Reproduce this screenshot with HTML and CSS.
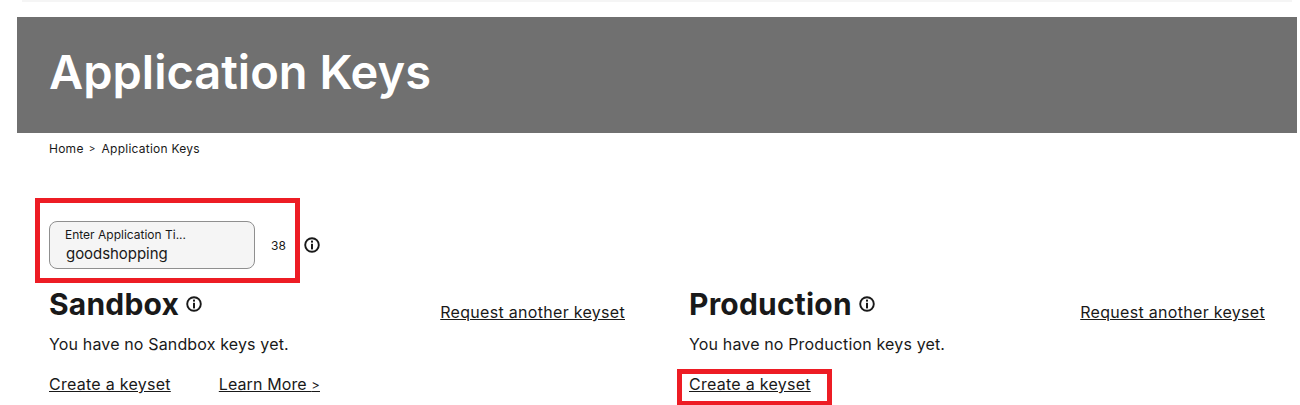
FILE: index.html
```html
<!DOCTYPE html>
<html lang="en">
<head>
  <meta charset="UTF-8">
  <meta name="viewport" content="width=device-width, initial-scale=1">
  <title>Application Keys</title>
  <link rel="stylesheet" href="styles.css">
</head>
<body>
  <div class="top-line"></div>
  <div class="page">
    <div class="banner"><h1>Application Keys</h1></div>
    <div class="content">
      <div class="crumbs"><a href="#">Home</a><span class="sep">&gt;</span><a href="#">Application Keys</a></div>

      <div class="title-row">
        <div class="field">
          <label>Enter Application Ti...</label>
          <div class="value">goodshopping</div>
        </div>
        <span class="count">38</span>
        <svg class="info info-lg" viewBox="0 0 16 16"><circle cx="8" cy="8" r="6.8"/><rect class="dot" x="7" y="3.6" width="2" height="2"/><rect class="dot" x="7" y="6.8" width="2" height="5.6"/></svg>
        <div class="highlight highlight-field"></div>
      </div>

      <div class="keys">
        <section class="keyset">
          <div class="keyset-head">
            <h2>Sandbox</h2>
            <svg class="info" viewBox="0 0 16 16"><circle cx="8" cy="8" r="6.8"/><rect class="dot" x="7" y="3.6" width="2" height="2"/><rect class="dot" x="7" y="6.8" width="2" height="5.6"/></svg>
            <a class="request" href="#">Request another keyset</a>
          </div>
          <p>You have no Sandbox keys yet.</p>
          <div class="links"><a href="#">Create a keyset</a><a class="more" href="#">Learn More <span class="arrow">&gt;</span></a></div>
        </section>
        <section class="keyset">
          <div class="keyset-head">
            <h2>Production</h2>
            <svg class="info" viewBox="0 0 16 16"><circle cx="8" cy="8" r="6.8"/><rect class="dot" x="7" y="3.6" width="2" height="2"/><rect class="dot" x="7" y="6.8" width="2" height="5.6"/></svg>
            <a class="request" href="#">Request another keyset</a>
          </div>
          <p>You have no Production keys yet.</p>
          <div class="links">
            <a class="marked" href="#">Create a keyset<span class="highlight highlight-link"></span></a>
          </div>
        </section>
      </div>
    </div>
  </div>
</body>
</html>
```

FILE: styles.css
```css
* { box-sizing: border-box; margin: 0; padding: 0; }
html, body { height: 405px; overflow: hidden; }
body { font-family: "Inter", "Liberation Sans", sans-serif; background: #fff; color: #191919; }
a { color: #191919; }

.top-line { height: 2px; margin: 0 8px 0 22px; background: #f5f5f5; }
.page { padding: 15px 3px 0 17px; }
.banner { height: 116px; background: #707070; padding: 26px 0 0 32px; }
.banner h1 { font-size: 47px; line-height: 58px; font-weight: 600; color: #fff; }

.content { padding: 0 15px 0 32px; }
.crumbs { display: flex; align-items: center; height: 16px; margin-top: 7px; font-size: 12px; letter-spacing: 0.25px; }
.crumbs a { text-decoration: none; }
.crumbs .sep { margin: 0 6px 0 5px; font-size: 10px; }

.title-row { position: relative; display: flex; align-items: center; margin-top: 65px; height: 48px; }
.field { width: 206px; height: 48px; padding: 5px 16px; background: #f5f5f5; border: 1px solid #8f8f8f; border-radius: 8px; }
.field label { display: block; margin: 0 0 1px -1px; font-size: 12px; line-height: 15px; }
.field .value { font-size: 15px; line-height: 22px; letter-spacing: -0.05px; }
.count { margin-left: 16px; font-size: 12px; }
.info { width: 16px; height: 16px; flex: none; }
.info circle { fill: none; stroke: #191919; stroke-width: 1.9; }
.info .dot { fill: #191919; }
.info-lg { margin-left: 18px; }

.keys { display: grid; grid-template-columns: 576px 576px; column-gap: 64px; margin-top: 17px; }
.keyset-head { display: flex; align-items: center; height: 36px; }
.keyset-head h2 { font-size: 30px; line-height: 36px; font-weight: 700; letter-spacing: 0.2px; }
.keyset-head .info { margin-left: 7px; }
.request { margin-left: auto; margin-top: 16px; font-size: 16px; letter-spacing: 0.3px; }
.keyset p { margin-top: 10px; font-size: 16px; line-height: 24px; letter-spacing: 0.15px; }
.links { display: flex; gap: 48px; margin-top: 16px; font-size: 16px; line-height: 24px; letter-spacing: 0.27px; }
.more { letter-spacing: 0.1px; }
.more .arrow { font-size: 13px; }

.marked { position: relative; }
.highlight { position: absolute; border: 5px solid #ed1c24; pointer-events: none; }
.highlight-field { left: -14px; top: -23px; width: 265px; height: 85px; }
.highlight-link { left: -12px; top: -3px; width: 155px; height: 37px; }
```
